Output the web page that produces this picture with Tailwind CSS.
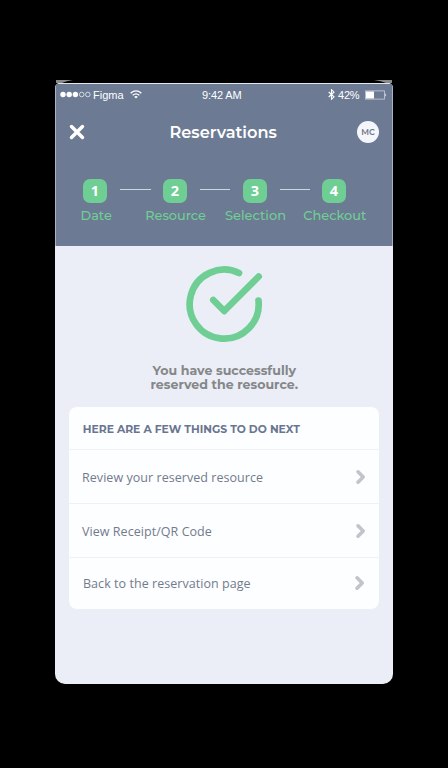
<!DOCTYPE html>
<html lang="en">
<head>
<meta charset="utf-8">
<title>Reservations</title>
<script src="https://cdn.jsdelivr.net/npm/@tailwindcss/browser@4"></script>
</head>
<body class="bg-black">
<div class="w-[448px] h-[768px] bg-black pt-[80px] pl-[55px] overflow-hidden font-['Montserrat','Inter',sans-serif]">
  <svg class="block w-[345px] h-[3px]" viewBox="0 0 345 3" fill="#8b8b8b"><path d="M1 0H18Q11 1 7 3H1zM319 0H337V3H331Q326 1 319 0z"/></svg>
  <main class="w-[338px] h-[601px] bg-[#ebeef7] rounded-t-[5px] rounded-b-[10px] overflow-hidden">
    <header class="h-[162.5px] bg-[#6c7b93] border-t border-x border-t-[#e4e7ec] border-x-[#a9b3c3] text-white">
      <div class="relative h-[23px] flex items-center pl-[4px] pr-[5px] pb-[2px] font-['Liberation_Sans',sans-serif] text-[11px]">
        <svg class="w-[31px] h-[7px]" viewBox="0 0 31 7" fill="white"><circle cx="3" cy="3.5" r="2.7"/><circle cx="9.2" cy="3.5" r="2.7"/><circle cx="15.4" cy="3.5" r="2.7"/><g fill="none" stroke="white" stroke-width=".7"><circle cx="21.7" cy="3.5" r="2.3"/><circle cx="27.8" cy="3.5" r="2.3"/></g></svg>
        <span class="ml-[2px] mt-[1px]">Figma</span>
        <svg class="absolute left-[74px] top-[6px] w-[12px] h-[9px]" viewBox="0 0 12 9" fill="none" stroke="white" stroke-width="1.3"><path d="M.6 3.2Q6-1.4 11.4 3.2M2.6 5.3Q6 2.5 9.4 5.3"/><path d="M4.2 6.7Q6 5.4 7.8 6.7L6 8.6z" fill="white" stroke="none"/></svg>
        <span class="absolute left-[146px] top-[3px] tracking-[-0.1px] whitespace-nowrap">9:42 AM</span>
        <svg class="ml-auto w-[7px] h-[11px]" viewBox="0 0 7 11" fill="none" stroke="white" stroke-width="1.1"><path d="M.7 3L6 7.8 3.5 10.3V.7L6 3.2.7 8"/></svg>
        <span class="ml-[3px] mt-[1px] w-[22px] text-[11px] tracking-[-0.2px]">42%</span>
        <svg class="ml-[5px] w-[22px] h-[10px]" viewBox="0 0 22 10"><rect x=".5" y=".9" width="19" height="8.2" fill="none" stroke="#c9d0db" stroke-width=".8"/><path d="M1 1.4H9V8.6H1z" fill="white"/><path d="M20.3 3.2Q22 5 20.3 6.8z" fill="white"/></svg>
      </div>
      <div class="relative h-[50px] flex items-center justify-between pl-[13px] pr-[13px]">
        <svg class="w-[16px] h-[16px]" viewBox="0 0 16 16" stroke="white" stroke-width="3.5" stroke-linecap="round"><path d="M2.5 2.5L13.5 13.5M13.5 2.5L2.5 13.5"/></svg>
        <svg class="w-[110px] h-[24px] ml-[5px]" viewBox="0 0 110 24" fill="white"><text x=".5" y="17.7" textLength="107.3" lengthAdjust="spacingAndGlyphs" font-size="16.4" font-weight="600">Reservations</text></svg>
        <div class="w-[22px] h-[22px] rounded-full bg-[#f4f6fb] text-[#6e7788]"><svg class="w-[22px] h-[22px]" viewBox="0 0 22 22" fill="currentColor"><text x="4.3" y="13.8" textLength="13.6" lengthAdjust="spacingAndGlyphs" font-size="8.2" font-weight="600">MC</text></svg></div>
      </div>
      <div class="relative mt-[22px] flex pl-[27px] items-center font-['Open_Sans',sans-serif] font-bold text-[14.5px] leading-[23px]">
        <div class="w-[24px] h-[24px] rounded-[7px] bg-[#6fce94] flex items-start justify-center">1</div>
        <div class="w-[31px] ml-[13px] mr-[12px] h-px bg-[#cbd7dc] -mt-[4px]"></div>
        <div class="w-[24px] h-[24px] rounded-[7px] bg-[#6fce94] flex items-start justify-center">2</div>
        <div class="w-[30px] ml-[13px] mr-[13px] h-px bg-[#cbd7dc] -mt-[4px]"></div>
        <div class="w-[24px] h-[24px] rounded-[7px] bg-[#6fce94] flex items-start justify-center">3</div>
        <div class="w-[30px] ml-[13px] mr-[12px] h-px bg-[#cbd7dc] -mt-[4px]"></div>
        <div class="w-[24px] h-[24px] rounded-[7px] bg-[#6fce94] flex items-start justify-center">4</div>
      </div>
      <svg class="block w-[336px] h-[24px]" viewBox="56 203 336 24" fill="#6fce94" font-size="12.4" font-weight="500">
        <text x="80.5" y="219.7" textLength="31.3" lengthAdjust="spacingAndGlyphs">Date</text>
        <text x="145.2" y="219.7" textLength="60.7" lengthAdjust="spacingAndGlyphs">Resource</text>
        <text x="225" y="219.7" textLength="61" lengthAdjust="spacingAndGlyphs">Selection</text>
        <text x="303.3" y="219.7" textLength="63" lengthAdjust="spacingAndGlyphs">Checkout</text>
      </svg>
    </header>
    <section class="h-[161.5px] flex flex-col items-center pt-[17.5px]">
      <svg class="w-[84px] h-[84px]" viewBox="182 263 84 84" fill="none" stroke="#6fce94" stroke-width="6.7" stroke-linecap="round" stroke-linejoin="round"><path d="M239 273A34.5 34.5 0 1 0 258.5 300.5"/><path d="M213.3 300L224.2 311 258.7 276.5"/></svg>
      <svg class="mt-[13px] w-[150px] h-[34px]" viewBox="149 360 150 34" fill="#858789" font-size="12.2" font-weight="700">
        <text x="152.5" y="375.3" textLength="143.5" lengthAdjust="spacingAndGlyphs">You have successfully</text>
        <text x="150.5" y="388.5" textLength="147.5" lengthAdjust="spacingAndGlyphs">reserved the resource.</text>
      </svg>
    </section>
    <section class="ml-[13.5px] w-[310.5px] h-[201.5px] rounded-[8px] bg-[#fdfeff] text-[#727b8c] font-['Open_Sans',sans-serif] text-[12.5px] tracking-[0.05px]">
      <div class="h-[43px] border-b border-[#eff1f5]">
        <svg class="block w-[311px] h-[42px] tracking-normal" viewBox="68.5 407 311 42" fill="#6a7590" font-family="Montserrat, Inter, sans-serif"><text x="82.3" y="433.3" textLength="217" lengthAdjust="spacingAndGlyphs" font-size="10.8" font-weight="700">HERE ARE A FEW THINGS TO DO NEXT</text></svg>
      </div>
      <div class="h-[54px] border-b border-[#eff1f5] flex items-center justify-between pl-[13.5px] pr-[13px]"><span class="pt-[3px]">Review your reserved resource</span><svg class="w-[11px] h-[16px]" viewBox="0 0 11 16" fill="none" stroke="#c0c4cb" stroke-width="3.6" stroke-linecap="round" stroke-linejoin="round"><path d="M3 2.8L8.2 8 3 13.2"/></svg></div>
      <div class="h-[54px] border-b border-[#eff1f5] flex items-center justify-between pl-[13.5px] pr-[13px]"><span class="pt-[3px]">View Receipt/QR Code</span><svg class="w-[11px] h-[16px]" viewBox="0 0 11 16" fill="none" stroke="#c0c4cb" stroke-width="3.6" stroke-linecap="round" stroke-linejoin="round"><path d="M3 2.8L8.2 8 3 13.2"/></svg></div>
      <div class="h-[50.5px] flex items-center justify-between pl-[14.5px] pr-[14px]"><span class="pt-[2px]">Back to the reservation page</span><svg class="w-[11px] h-[16px]" viewBox="0 0 11 16" fill="none" stroke="#c0c4cb" stroke-width="3.6" stroke-linecap="round" stroke-linejoin="round"><path d="M3 2.8L8.2 8 3 13.2"/></svg></div>
    </section>
  </main>
</div>
</body>
</html>
